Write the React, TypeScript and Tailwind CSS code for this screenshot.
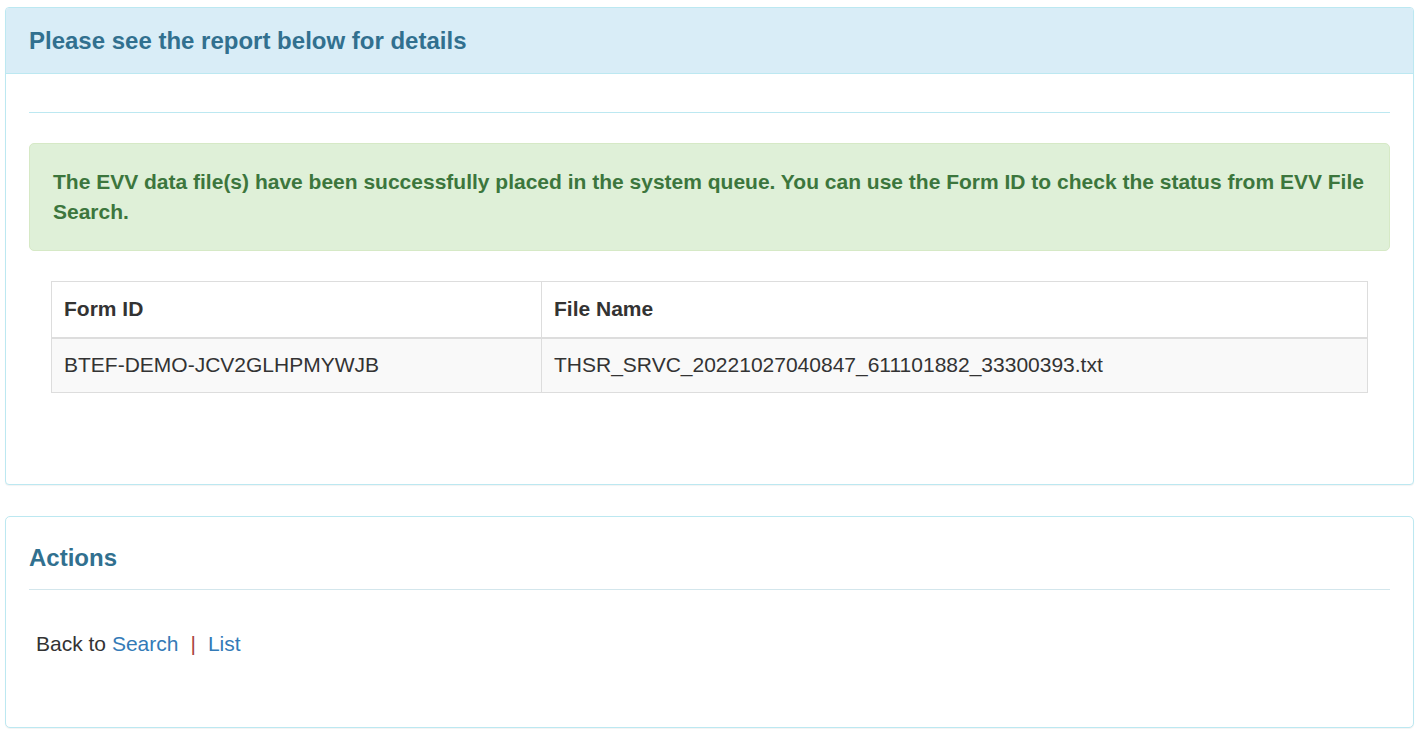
export default function App() {
    return (
        <div className="min-h-screen bg-white px-[5px] pt-[7px] font-['Liberation_Sans',Arial,sans-serif] text-[#333]">
            <div className="rounded-[4px] border border-[#bce8f1] bg-white shadow-[0_1px_1px_rgba(0,0,0,0.05)]">
                <div className="flex h-[66px] items-center rounded-t-[3px] border-b border-[#bce8f1] bg-[#d9edf7] px-[23px]">
                    <h3 className="text-[24px] font-bold text-[#31708f]">Please see the report below for details</h3>
                </div>
                <div className="px-[23px] pt-[38px] pb-[91px]">
                    <hr className="border-0 border-t border-[#bce8f1]" />
                    <div className="mt-[30px] rounded-[5px] border border-[#d6e9c6] bg-[#dff0d8] px-[23px] py-[23px] text-[21px] leading-[30px] font-bold text-[#3c763d]">
                        The EVV data file(s) have been successfully placed in the system queue. You can use the Form ID to check the status from EVV File Search.
                    </div>
                    <div className="mt-[30px] px-[22px]">
                        <table className="w-full border-collapse border border-[#ddd] text-[21px] leading-[30px]">
                            <thead>
                                <tr>
                                    <th className="h-[56px] w-[490px] border border-b-2 border-[#ddd] px-3 text-left font-bold">Form ID</th>
                                    <th className="h-[56px] border border-b-2 border-[#ddd] px-3 text-left font-bold">File Name</th>
                                </tr>
                            </thead>
                            <tbody>
                                <tr className="bg-[#f9f9f9]">
                                    <td className="h-[55px] border border-[#ddd] px-3">BTEF-DEMO-JCV2GLHPMYWJB</td>
                                    <td className="h-[55px] border border-[#ddd] px-3">THSR_SRVC_20221027040847_611101882_33300393.txt</td>
                                </tr>
                            </tbody>
                        </table>
                    </div>
                </div>
            </div>

            <div className="mt-[31px] rounded-[5px] border border-[#bce8f1] bg-white px-[23px] pt-[26px] pb-[68px] shadow-[0_1px_1px_rgba(0,0,0,0.05)]">
                <h3 className="text-[24px] leading-[30px] font-bold text-[#31708f]">Actions</h3>
                <hr className="mt-[16px] border-0 border-t border-[#d3e6ec]" />
                <div className="mt-[39px] pl-[7px] text-[21px] leading-[30px]">
                    Back to <a className="text-[#337ab7]">Search</a>
                    <span className="px-[12px] text-[#a94442]">|</span>
                    <a className="text-[#337ab7]">List</a>
                </div>
            </div>
        </div>
    );
}
